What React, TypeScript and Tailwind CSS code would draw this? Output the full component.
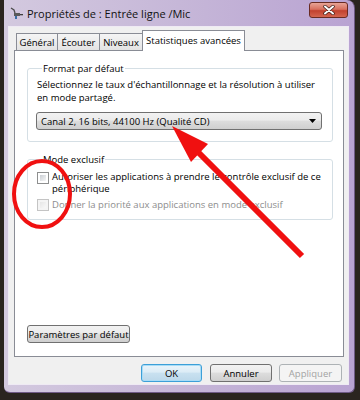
import React from "react";

const btn =
  "flex items-center justify-center h-[18px] rounded-[3px] border border-[#707070] bg-[linear-gradient(#f2f2f2_0%,#ebebeb_45%,#dddddd_50%,#cfcfcf_100%)] text-black";

function Check({ disabled }: { disabled?: boolean }) {
  return (
    <div
      className={
        disabled
          ? "w-[12px] h-[12px] shrink-0 border border-[#c4c4c4] bg-[#f4f4f4] p-[2px]"
          : "w-[12px] h-[12px] shrink-0 border border-[#8e8f8f] bg-white p-[2px]"
      }
    >
      <div
        className={
          disabled
            ? "w-full h-full bg-[linear-gradient(135deg,#e6e6e6,#f8f8f8)]"
            : "w-full h-full bg-[linear-gradient(135deg,#cbcfd5,#f6f6f6)]"
        }
      />
    </div>
  );
}

export default function App() {
  return (
    <div className="relative w-[360px] h-[400px] overflow-hidden bg-[#2a241f] font-['Open_Sans',sans-serif] text-[9.5px] leading-[13px] text-black">
      <div className="ml-[4px] w-[351px] h-[393px] flex flex-col pl-[4px] pr-[5px] pb-[7px] rounded-b-[6px] rounded-tr-[8px] bg-[linear-gradient(90deg,#d3c9df_0%,#c6b7d8_50%,#b9a3d2_100%)] border-r border-b border-[#6f5a86]">
        {/* title bar */}
        <div className="h-[26px] flex items-start shrink-0">
          <svg className="ml-[2px] mt-[7px]" width="13" height="13" viewBox="0 0 13 13">
            <path d="M1 1 L4 3 L5 6" stroke="#4b4b4b" strokeWidth="1.3" fill="none" />
            <rect x="4" y="6" width="6" height="3" fill="#5a5a5a" />
            <rect x="10" y="7" width="3" height="1.3" fill="#3d3d3d" />
            <rect x="5" y="9" width="2" height="3" fill="#3a6ea5" />
          </svg>
          <div className="ml-[4px] mt-[7px] text-[11px] leading-[14px] text-[#111]">
            Propriétés de : Entrée ligne /Mic
          </div>
          <div className="ml-auto mt-[2px] mr-[1px] w-[39px] h-[16px] rounded-[3px] border border-[#6a2b22] bg-[linear-gradient(#e8a496_0%,#d8705e_45%,#c2412e_55%,#d4654f_100%)] flex items-center justify-center">
            <svg width="12" height="10" viewBox="0 0 12 10">
              <path d="M2 1.5 L10 8.5 M10 1.5 L2 8.5" stroke="#3b1a15" strokeWidth="3.4" strokeLinecap="round" />
              <path d="M2 1.5 L10 8.5 M10 1.5 L2 8.5" stroke="#ffffff" strokeWidth="2" strokeLinecap="round" />
            </svg>
          </div>
        </div>

        {/* client */}
        <div className="flex-1 bg-[#f0f0f0] flex flex-col border border-[#efeaf4]">
          {/* tabs */}
          <div className="flex items-end h-[19px] mt-[4px] pl-[7px]">
            <div className="w-[42px] h-[17px] border border-b-0 border-[#898c95] bg-[linear-gradient(#f5f5f5,#e3e3e3)] flex items-center justify-center pt-[1px]">
              Général
            </div>
            <div className="-ml-px w-[43px] h-[17px] border border-b-0 border-[#898c95] bg-[linear-gradient(#f5f5f5,#e3e3e3)] flex items-center justify-center pt-[1px]">
              Écouter
            </div>
            <div className="-ml-px w-[44px] h-[17px] border border-b-0 border-[#898c95] bg-[linear-gradient(#f5f5f5,#e3e3e3)] flex items-center justify-center pt-[1px]">
              Niveaux
            </div>
            <div className="relative z-10 -ml-px -mb-px w-[103px] h-[21px] border border-b-0 border-[#898c95] bg-white flex items-start justify-center pt-[3px]">
              Statistiques avancées
            </div>
          </div>

          {/* panel */}
          <div className="ml-[5px] w-[330px] h-[307px] border border-[#898c95] bg-white flex flex-col px-[12px]">
            <fieldset className="mt-[11px] w-[306px] border border-[#d5dfe5] rounded-[3px] pl-[9px] pr-[6px] pb-[11px]">
              <legend className="ml-[5px] px-[1px] leading-[13px]">Format par défaut</legend>
              <div className="mt-[3px]">
                Sélectionnez le taux d&apos;échantillonnage et la résolution à utiliser
                <br />
                en mode partagé.
              </div>
              <div className="mt-[8px] -ml-[1px] w-[286px] h-[18px] rounded-[3px] border border-[#707070] bg-[linear-gradient(#f2f2f2_0%,#ebebeb_45%,#dddddd_50%,#cfcfcf_100%)] flex items-center pl-[4px] pr-[5px]">
                <span>Canal 2, 16 bits, 44100 Hz (Qualité CD)</span>
                <svg className="ml-auto" width="7" height="4" viewBox="0 0 7 4">
                  <path d="M0 0 L7 0 L3.5 4 Z" fill="#000" />
                </svg>
              </div>
            </fieldset>

            <fieldset className="mt-[11px] w-[306px] border border-[#d5dfe5] rounded-[3px] pl-[9px] pr-[6px] pb-[8px]">
              <legend className="ml-[5px] px-[1px] leading-[13px]">Mode exclusif</legend>
              <div className="mt-[5px] flex items-start gap-[3px]">
                <div className="mt-[1px]">
                  <Check />
                </div>
                <div className="leading-[11.5px]">
                  Autoriser les applications à prendre le contrôle exclusif de ce
                  <br />
                  périphérique
                </div>
              </div>
              <div className="mt-[4px] flex items-center gap-[3px] text-[#8d8d8d]">
                <Check disabled />
                <div>Donner la priorité aux applications en mode exclusif</div>
              </div>
            </fieldset>

            <div className="mt-auto mb-[13px] flex">
              <div className={btn + " w-[103px]"}>Paramètres par défaut</div>
            </div>
          </div>

          {/* bottom buttons */}
          <div className="mt-[7px] flex justify-end pr-[6px]">
            <div className="w-[61px] h-[18px] rounded-[3px] border border-[#3c9fd8] bg-[linear-gradient(#eaf4fa_0%,#dcecf6_45%,#c9e1f0_50%,#bcd8ea_100%)] flex items-center justify-center shadow-[inset_0_0_0_1px_#a8dcf6]">
              OK
            </div>
            <div className={btn + " ml-[8px] w-[62px]"}>Annuler</div>
            <div className="ml-[7px] w-[63px] h-[18px] rounded-[3px] border border-[#adb2b5] bg-[#f4f4f4] text-[#a3a3a3] flex items-center justify-center">
              Appliquer
            </div>
          </div>
        </div>
      </div>

      {/* annotations */}
      <svg className="absolute inset-0 pointer-events-none" width="360" height="400" viewBox="0 0 360 400">
        <ellipse cx="42" cy="194" rx="28" ry="33" fill="none" stroke="#f01010" strokeWidth="4" />
        <line x1="197" y1="151" x2="302" y2="256" stroke="#f01010" strokeWidth="6" />
        <polygon points="172,126 208,144 191,162" fill="#f01010" />
      </svg>
    </div>
  );
}
